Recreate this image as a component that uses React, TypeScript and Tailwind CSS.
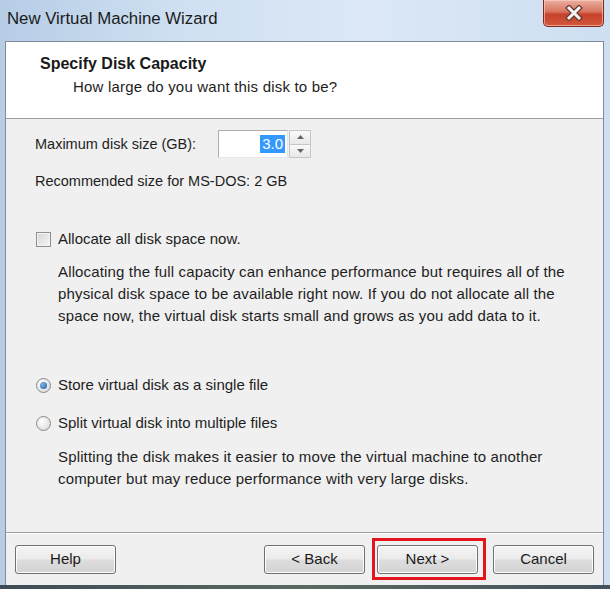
import React from "react";

const font = { fontFamily: '"Liberation Sans", Arial, sans-serif' };

function Btn({ label }: { label: string }) {
  return (
    <div className="w-[101px] h-[29px] rounded-[3px] border border-[#707070] bg-[linear-gradient(#f4f4f4_0%,#ebebeb_48%,#dddddd_52%,#d3d3d3_100%)] shadow-[inset_0_0_0_1px_#fcfcfc] flex items-center justify-center text-[15px] text-[#1a1a1a]">
      {label}
    </div>
  );
}

export default function App() {
  return (
    <div
      className="w-[610px] h-[589px] overflow-hidden flex flex-col bg-[linear-gradient(90deg,#b7cde6_0%,#cfe0f2_30%,#dce8f5_60%,#cddff1_100%)]"
      style={font}
    >
      {/* title bar */}
      <div className="h-[41px] flex items-start justify-between shrink-0">
        <div className="pl-[7px] pt-[8px] text-[16.8px] text-[#1b1b1b] leading-[22px]">
          New Virtual Machine Wizard
        </div>
        <div className="mr-[6px] w-[61px] h-[27px] rounded-b-[5px] border border-t-0 border-[#7b2a1e] bg-[linear-gradient(#eab0a2_0%,#d9745f_45%,#c7422a_55%,#d0573d_100%)] shadow-[inset_0_0_0_1px_rgba(255,210,200,0.6)] flex items-center justify-center">
          <svg width="20" height="16" viewBox="0 0 20 16">
            <path d="M5 3 L15 13 M15 3 L5 13" stroke="#6a3a32" strokeWidth="5.5" strokeLinecap="square" />
            <path d="M5 3 L15 13 M15 3 L5 13" stroke="#f4f4f4" strokeWidth="3" strokeLinecap="square" />
          </svg>
        </div>
      </div>

      {/* client */}
      <div className="ml-[5px] mr-[6px] flex-1 flex flex-col border border-[#7f8b97] border-b-0 bg-[#f0f0f0]">
        {/* header */}
        <div className="h-[77px] shrink-0 bg-white border-b border-[#a0a0a0] pl-[34px] pt-[11px]">
          <div className="text-[16px] font-bold text-[#1a1a1a] leading-[22px]">Specify Disk Capacity</div>
          <div className="pl-[33px] pt-[1px] text-[15px] tracking-[0.2px] text-[#1e1e1e] leading-[22px]">
            How large do you want this disk to be?
          </div>
        </div>

        {/* body */}
        <div className="flex-1 pl-[29px] text-[15px] text-[#1e1e1e]">
          <div className="flex items-center mt-[11px] h-[28px]">
            <div className="w-[183px] leading-[20px] text-[14.5px]">Maximum disk size (GB):</div>
            <div className="flex">
              <div className="w-[70px] h-[28px] bg-white border border-[#abadb3] border-r-[#e3e9ef] border-b-[#e3e9ef] flex items-center justify-end pr-[2px]">
                <span className="bg-[#3399ff] text-white px-[2px] leading-[18px]">3.0</span>
              </div>
              <div className="w-[22px] h-[28px] flex flex-col ml-[1px]">
                <div className="flex-1 border border-[#c6c6c6] bg-[linear-gradient(#f9f9f9,#e8e8e8)] flex items-center justify-center">
                  <svg width="7" height="4" viewBox="0 0 7 4"><path d="M0 4 L3.5 0 L7 4 Z" fill="#666" /></svg>
                </div>
                <div className="flex-1 border border-t-0 border-[#c6c6c6] bg-[linear-gradient(#f9f9f9,#e8e8e8)] flex items-center justify-center">
                  <svg width="7" height="4" viewBox="0 0 7 4"><path d="M0 0 L3.5 4 L7 0 Z" fill="#666" /></svg>
                </div>
              </div>
            </div>
          </div>
          <div className="mt-[13px] leading-[20px] text-[14.5px]">Recommended size for MS-DOS: 2 GB</div>

          <div className="flex items-center mt-[38px] h-[20px]">
            <div className="w-[15px] h-[15px] ml-[1px] border border-[#8f8f8f] bg-[linear-gradient(135deg,#d6d6d6,#f6f6f6)] shadow-[inset_0_0_0_1px_#f4f4f4]" />
            <div className="ml-[7px] leading-[20px]">Allocate all disk space now.</div>
          </div>
          <div className="pl-[23px] mt-[12px] leading-[22px] tracking-[0.15px]">
            <div>Allocating the full capacity can enhance performance but requires all of the</div>
            <div>physical disk space to be available right now. If you do not allocate all the</div>
            <div>space now, the virtual disk starts small and grows as you add data to it.</div>
          </div>

          <div className="flex items-center mt-[48px] h-[20px]">
            <div className="w-[15px] h-[15px] ml-[1px] rounded-full border border-[#8a8a8a] bg-[radial-gradient(circle_at_35%_35%,#ffffff,#d4d4d4)] flex items-center justify-center">
              <div className="w-[7px] h-[7px] rounded-full bg-[radial-gradient(circle_at_35%_35%,#7fb6ea,#1e5a9c)]" />
            </div>
            <div className="ml-[7px] leading-[20px]">Store virtual disk as a single file</div>
          </div>
          <div className="flex items-center mt-[18px] h-[20px]">
            <div className="w-[15px] h-[15px] ml-[1px] rounded-full border border-[#8a8a8a] bg-[radial-gradient(circle_at_35%_35%,#ffffff,#d4d4d4)]" />
            <div className="ml-[7px] leading-[20px]">Split virtual disk into multiple files</div>
          </div>
          <div className="pl-[23px] mt-[13px] leading-[22px] tracking-[0.15px]">
            <div>Splitting the disk makes it easier to move the virtual machine to another</div>
            <div>computer but may reduce performance with very large disks.</div>
          </div>
        </div>

        {/* footer */}
        <div className="h-[53px] shrink-0 border-t border-[#a0a0a0] shadow-[inset_0_1px_0_#ffffff] flex items-start pt-[12px] pl-[9px] pr-[9px]">
          <Btn label="Help" />
          <div className="flex-1" />
          <Btn label="< Back" />
          <div className="w-[12px]" />
          <div className="relative">
            <Btn label="Next >" />
            <div className="absolute left-[-5px] right-[-8px] top-[-7px] bottom-[-6px] border-[3px] border-[#e3141c]" />
          </div>
          <div className="w-[15px]" />
          <Btn label="Cancel" />
        </div>
      </div>
      <div className="h-[4px] shrink-0 bg-[linear-gradient(90deg,#3d4b56,#5a6a60,#44525c)]" />
    </div>
  );
}
